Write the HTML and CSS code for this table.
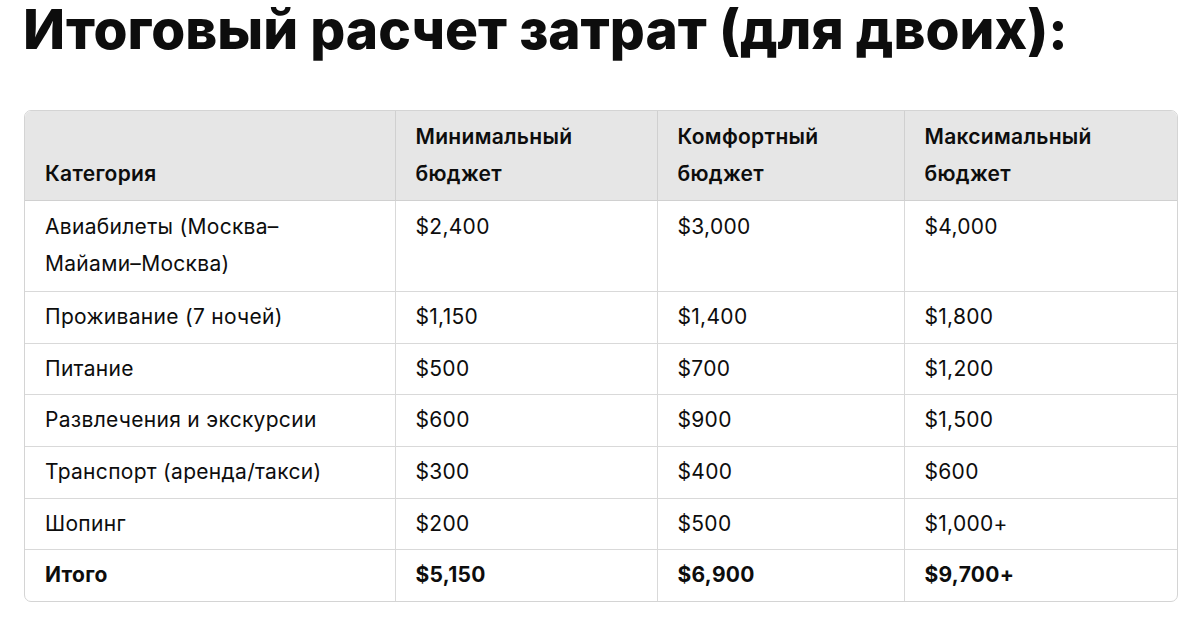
FILE: index.html
```html
<!DOCTYPE html>
<html lang="ru">
<head>
<meta charset="utf-8">
<link rel="stylesheet" href="styles.css">
</head>
<body>
<h1 class="title">Итоговый расчет затрат (для двоих):</h1>
<div class="table-wrap">
<table class="budget">
<colgroup>
<col class="c1"><col class="c2"><col class="c3"><col class="c4">
</colgroup>
<thead>
<tr><th class="bottom">Категория</th><th>Минимальный бюджет</th><th>Комфортный бюджет</th><th>Максимальный бюджет</th></tr>
</thead>
<tbody>
<tr class="tall"><td>Авиабилеты (Москва–<br>Майами–Москва)</td><td>$2,400</td><td>$3,000</td><td>$4,000</td></tr>
<tr><td>Проживание (7 ночей)</td><td>$1,150</td><td>$1,400</td><td>$1,800</td></tr>
<tr><td>Питание</td><td>$500</td><td>$700</td><td>$1,200</td></tr>
<tr><td>Развлечения и экскурсии</td><td>$600</td><td>$900</td><td>$1,500</td></tr>
<tr><td>Транспорт (аренда/такси)</td><td>$300</td><td>$400</td><td>$600</td></tr>
<tr><td>Шопинг</td><td>$200</td><td>$500</td><td>$1,000+</td></tr>
<tr class="total"><td>Итого</td><td>$5,150</td><td>$6,900</td><td>$9,700+</td></tr>
</tbody>
</table>
</div>
</body>
</html>
```

FILE: styles.css
```css
html, body {
  margin: 0;
  padding: 0;
  background: #ffffff;
}
body {
  padding: 0 22px 0 24px;
  font-family: Inter, "Noto Sans", sans-serif;
  color: #0d0d0d;
}
.title {
  margin: 0 0 0 -1px;
  padding: 0;
  font-size: 55px;
  line-height: 58px;
  font-weight: 800;
  letter-spacing: 0;
  color: #0d0d0d;
  height: 110px;
  white-space: nowrap;
}
.table-wrap {
  border: 1px solid #d4d4d4;
  border-radius: 7px;
  overflow: hidden;
}
.budget {
  width: 100%;
  border-collapse: collapse;
  table-layout: fixed;
  font-size: 21px;
  letter-spacing: 0.3px;
  line-height: 36.7px;
}
.c1 { width: 370px; }
.c2 { width: 262px; }
.c3 { width: 247px; }
.budget th,
.budget td {
  text-align: left;
  vertical-align: top;
  padding: 7px 19px 7px 20px;
  border-right: 1px solid #d9d9d9;
  border-bottom: 1px solid #d9d9d9;
}
.budget th,
.budget .tall td {
  padding-top: 8px;
  padding-bottom: 8px;
}
.budget th:last-child,
.budget td:last-child { border-right: none; }
.budget tbody tr:last-child td { border-bottom: none; }
.budget th {
  background: #e6e6e6;
  font-weight: 600;
  border-bottom-color: #d0d0d0;
  border-right-color: #d0d0d0;
}
.budget th.bottom { vertical-align: bottom; }
.budget td { font-weight: 400; }
.budget .total td { font-weight: 700; }
```
